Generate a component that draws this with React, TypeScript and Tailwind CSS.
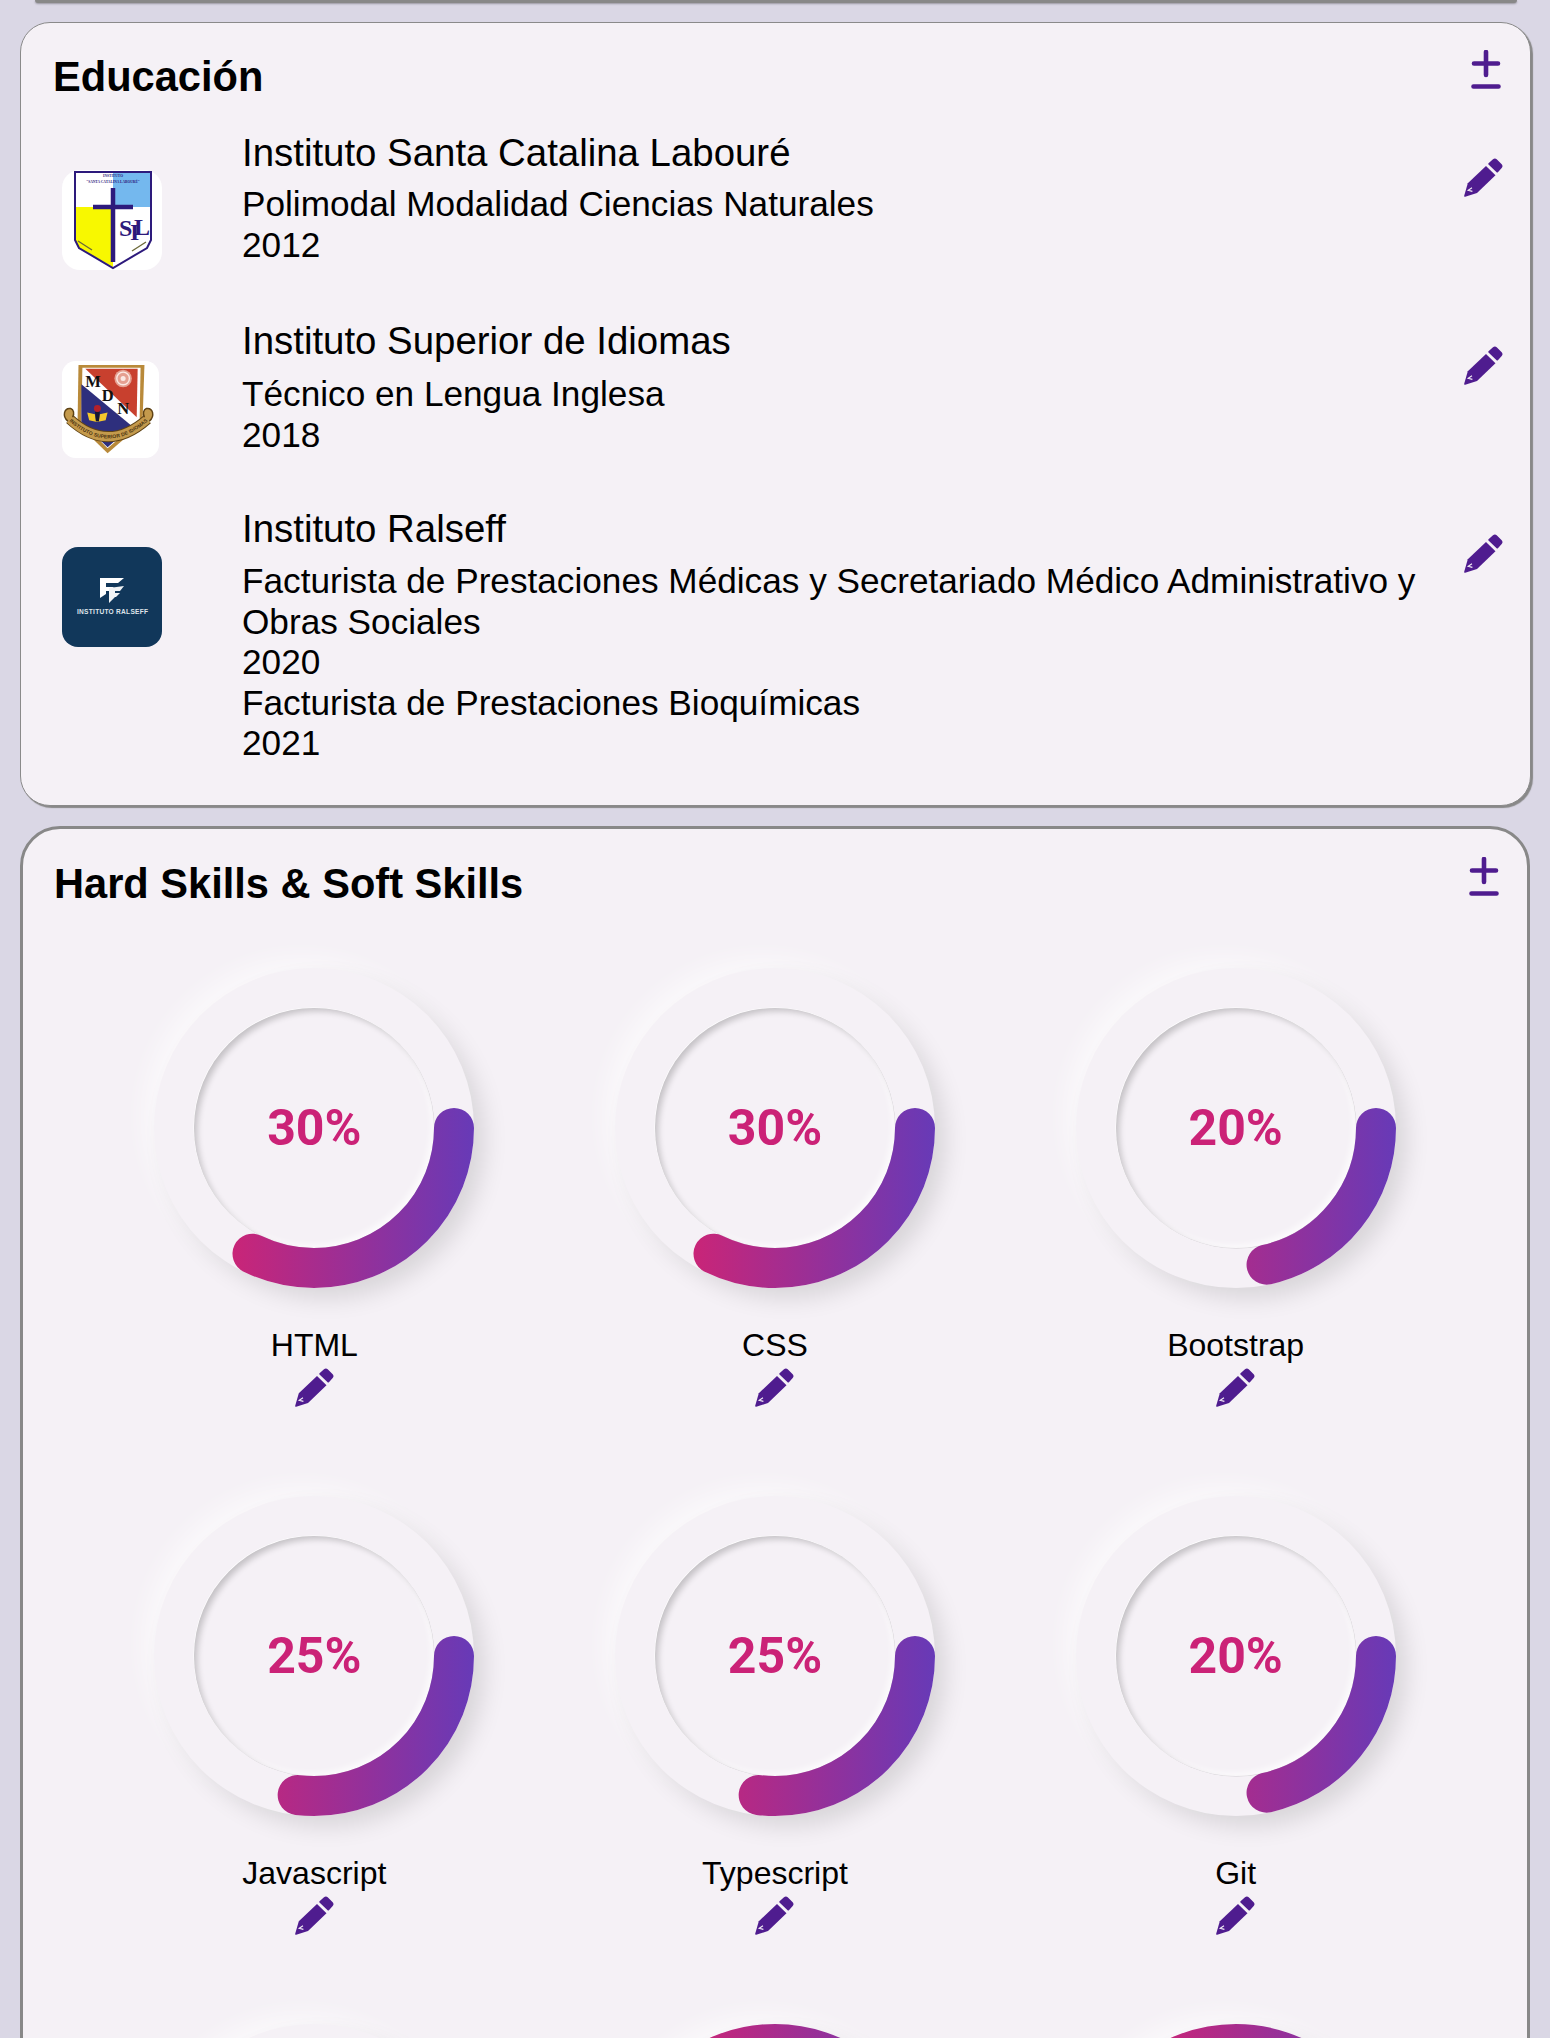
type Skill = { name: string; value: number };

const skills: Skill[] = [
  { name: "HTML", value: 30 },
  { name: "CSS", value: 30 },
  { name: "Bootstrap", value: 20 },
  { name: "Javascript", value: 25 },
  { name: "Typescript", value: 25 },
  { name: "Git", value: 20 },
];

// only the top of the third row is in the frame
const nextRow = [0, 90, 90];

const RADIUS = 140;
const DASH_TOTAL = 945;

function Pencil({ className }: { className?: string }) {
  return (
    <svg viewBox="0 0 39 39" className={`h-[39px] w-[39px] shrink-0 ${className ?? ""}`} aria-hidden="true">
      <path
        d="M24.5 5.2 29 1.2c1.2-1 2.6-1 3.7 0l5 5c1.1 1.2 1.1 2.6 0 3.8l-3.8 4.2c-.4.4-.9.4-1.3 0L24.5 6.6c-.4-.4-.4-1 0-1.4z"
        fill="#4f1c8f"
      />
      <path
        d="M22 8 31.5 17.2 13 35 1.2 38.8c-.7.2-1.2-.3-1-1L3.8 25.2z"
        fill="#4f1c8f"
      />
      <path d="M8 29.8 4.2 32.2 8.4 33.4" fill="none" stroke="#f5f1f6" strokeWidth="1.1" />
    </svg>
  );
}

function PlusMinus({ className }: { className?: string }) {
  return (
    <svg viewBox="0 0 30 39" className={`h-[39px] w-[30px] shrink-0 ${className ?? ""}`} aria-hidden="true">
      <path d="M15 2v23M3 13.5h24M2.5 36.5h25" stroke="#4f1c8f" strokeWidth="4.6" strokeLinecap="round" fill="none" />
    </svg>
  );
}

function SantaCatalinaLogo() {
  return (
    <svg viewBox="0 0 100 100" className="h-[100px] w-[100px]" aria-hidden="true">
      <rect width="100" height="100" rx="18" fill="#fff" />
      <path d="M51 3h38v34H51z" fill="#74b8ee" />
      <path d="M13 37h38v60L17 78l-4-8z" fill="#f8f800" />
      <path d="M13 2h76v68l-4 8-34 20-34-20-4-8z" fill="none" stroke="#2d1a7c" strokeWidth="2" />
      <path d="M51 18v74M31 37h40" stroke="#2d1a7c" strokeWidth="4.5" fill="none" />
      <text x="51" y="7" textAnchor="middle" fontSize="3.6" fontWeight="700" fontFamily="Liberation Serif, serif" fill="#2d1a7c">
        INSTITUTO
      </text>
      <text x="51" y="12.5" textAnchor="middle" fontSize="3.6" fontWeight="700" fontFamily="Liberation Serif, serif" fill="#2d1a7c">
        "SANTA CATALINA LABOURÉ"
      </text>
      <text x="57 68 72" y="66 70 65" fontSize="24" fontFamily="Liberation Serif, serif" fontWeight="700" fill="#2d1a7c">
        SIL
      </text>
      <path d="M16 71l14 9M70 81l14-9" stroke="#6d6a3a" strokeWidth="1.4" fill="none" />
    </svg>
  );
}

function IdiomasLogo() {
  return (
    <svg viewBox="0 0 100 100" className="h-[97px] w-[97px]" aria-hidden="true">
      <rect width="100" height="100" rx="14" fill="#fff" />
      <path d="M17 4h68l-2 60-36 31-31-30z" fill="#b98a3a" />
      <path d="M21 7h60l-1 55-33 28-27-27z" fill="#fff" />
      <path d="M24 8h54l-1 50z" fill="#c8402e" />
      <path d="M20 24l52 43-25 22-27-26z" fill="#2e2f7d" />
      <circle cx="63" cy="18" r="9" fill="#e5a091" />
      <circle cx="63" cy="18" r="6.5" fill="none" stroke="#fbe9e4" strokeWidth="1.4" />
      <circle cx="63" cy="18" r="2.6" fill="#fbe9e4" />
      <text x="24 41 57" y="27 41 55" fontSize="17" fontFamily="Liberation Serif, serif" fontWeight="700" fill="#111">
        MDN
      </text>
      <path d="M26 53l8 2 1 7h3l1-7 8-2-2 8-9 2-8-2z" fill="#f4c92c" />
      <path d="M34 52h5l-1 10h-3z" fill="#16162e" />
      <circle cx="36.5" cy="49" r="3.6" fill="#b3202a" />
      <path id="ribbon-arc" d="M8 60Q47 96 88 60" fill="none" stroke="#5f4315" strokeWidth="11" />
      <path d="M8 60Q47 96 88 60" fill="none" stroke="#c49a4c" strokeWidth="9" />
      <path d="M6 62c-6-5-4-14 3-13 3 1 4 5 2 9M90 62c6-5 4-14-3-13-3 1-4 5-2 9" fill="#c49a4c" stroke="#5f4315" strokeWidth="1.5" />
      <text fontSize="5.2" fontWeight="700" fontFamily="Liberation Sans, sans-serif" fill="#4a3210">
        <textPath href="#ribbon-arc" startOffset="50%" textAnchor="middle">
          <tspan dy="1.8">INSTITUTO SUPERIOR DE IDIOMAS</tspan>
        </textPath>
      </text>
    </svg>
  );
}

function RalseffLogo() {
  return (
    <svg viewBox="0 0 100 100" className="h-[100px] w-[100px]" aria-hidden="true">
      <rect width="100" height="100" rx="16" fill="#11375a" />
      <path d="M38 31h24l-6 5H44v4h8l-5 4h-3v3l-6 4z" fill="#fff" />
      <path d="M47 41l15-2-4 5h-5v2h5l-4 4h-1l-6 6z" fill="#f1f3f5" />
      <text x="50.5" y="67" textAnchor="middle" fontSize="6.6" fontWeight="700" textLength="71" fontFamily="Liberation Sans, sans-serif" fill="#dfe4ea">
        INSTITUTO RALSEFF
      </text>
    </svg>
  );
}

function Ring({ value, showText = true, id }: { value: number; showText?: boolean; id: string }) {
  const dash = (value / 100) * DASH_TOTAL;
  return (
    <div className="relative flex h-[320px] w-[320px] items-center justify-center rounded-full bg-[#f5f1f6] shadow-[12px_12px_24px_-2px_rgba(0,0,0,0.12),-12px_-12px_24px_-2px_rgba(255,255,255,0.55)]">
      <div className="flex h-[240px] w-[240px] items-center justify-center rounded-full shadow-[inset_4px_4px_6px_-1px_rgba(0,0,0,0.2),inset_-4px_-4px_6px_-1px_rgba(255,255,255,0.7),-0.5px_-0.5px_0_rgba(255,255,255,1),0.5px_0.5px_0_rgba(0,0,0,0.15)]">
        {showText && (
          <span className="font-['Roboto',sans-serif] text-[50px] font-bold text-[#cb2277]">{value}%</span>
        )}
      </div>
      {value > 0 && (
        <svg className="absolute left-0 top-0 h-[320px] w-[320px]" viewBox="0 0 320 320" aria-hidden="true">
          <defs>
            <linearGradient id={id} gradientUnits="userSpaceOnUse" x1="0" y1="0" x2="320" y2="0">
              <stop offset="0%" stopColor="#e91e63" />
              <stop offset="100%" stopColor="#673ab7" />
            </linearGradient>
          </defs>
          <circle
            cx="160"
            cy="160"
            r={RADIUS}
            fill="none"
            stroke={`url(#${id})`}
            strokeWidth="40"
            strokeLinecap="round"
            strokeDasharray={`${dash} ${DASH_TOTAL}`}
          />
        </svg>
      )}
    </div>
  );
}

function SkillItem({ skill }: { skill: Skill }) {
  return (
    <div className="flex h-[528px] flex-col items-center">
      <Ring value={skill.value} id={`ring-${skill.name}`} />
      <div className="mt-[39px] text-[32px] leading-[36px] text-black">{skill.name}</div>
      <Pencil className="mt-[5px]" />
    </div>
  );
}

function EduRow({
  logo,
  title,
  lines,
  className,
  logoClass,
  linesClass,
}: {
  logo: React.ReactNode;
  title: string;
  lines: string[];
  className?: string;
  logoClass?: string;
  linesClass?: string;
}) {
  return (
    <div className={`flex items-start ${className ?? ""}`}>
      <div className={`w-[189px] shrink-0 pl-[9px] ${logoClass ?? ""}`}>{logo}</div>
      <div className="min-w-0 flex-1">
        <div className="text-[38.4px] leading-[44px]">{title}</div>
        <div className={`text-[35.2px] leading-[40.5px] ${linesClass ?? ""}`}>
          {lines.map((l) => (
            <div key={l}>{l}</div>
          ))}
        </div>
      </div>
      <Pencil className="-mr-[2px] ml-[23px] mt-[27px]" />
    </div>
  );
}

export default function App() {
  return (
    <div className="h-[2038px] overflow-hidden bg-[#dad7e5] font-['Liberation_Sans',Arial,sans-serif] text-black">
      <div className="ml-[35px] h-[3px] w-[1482px] rounded-b-[30px] bg-[#888] shadow-[0_1px_2px_rgba(0,0,0,0.3)]" />
      <section className="ml-[20px] mt-[19px] h-[784px] w-[1511px] rounded-[30px] border border-[#8a8a8a] bg-[#f5f1f6] pl-[32px] pr-[29px] pt-[31px] shadow-[2px_2px_1px_#888]">
        <div className="flex items-start justify-between">
          <h2 className="text-[41.6px] font-bold leading-[46px]">Educación</h2>
          <PlusMinus className="mt-[-4px]" />
        </div>
        <EduRow
          className="mt-[31px]"
          logoClass="pt-[39px]"
          linesClass="mt-[9px]"
          logo={<SantaCatalinaLogo />}
          title="Instituto Santa Catalina Labouré"
          lines={["Polimodal Modalidad Ciencias Naturales", "2012"]}
        />
        <EduRow
          className="mt-[49px]"
          logoClass="pt-[42px]"
          linesClass="mt-[11px]"
          logo={<IdiomasLogo />}
          title="Instituto Superior de Idiomas"
          lines={["Técnico en Lengua Inglesa", "2018"]}
        />
        <EduRow
          className="mt-[49px]"
          logoClass="pt-[40px]"
          linesClass="mt-[10px]"
          logo={<RalseffLogo />}
          title="Instituto Ralseff"
          lines={[
            "Facturista de Prestaciones Médicas y Secretariado Médico Administrativo y Obras Sociales",
            "2020",
            "Facturista de Prestaciones Bioquímicas",
            "2021",
          ]}
        />
      </section>
      <section className="ml-[20px] mt-[20px] h-[1300px] w-[1510px] rounded-[40px] border-[3px] border-[#888] bg-[#f5f1f6] pl-[31px] pr-[28px] pt-[28px]">
        <div className="flex items-start justify-between">
          <h2 className="mt-[4px] text-[41.6px] font-bold leading-[46px]">Hard Skills &amp; Soft Skills</h2>
          <PlusMinus />
        </div>
        <div className="ml-[30px] mt-[61px] grid w-[1382px] grid-cols-3">
          {skills.map((s) => (
            <SkillItem key={s.name} skill={s} />
          ))}
          {nextRow.map((v, i) => (
            <div key={i} className="flex justify-center">
              <Ring value={v} showText={false} id={`ring-next-${i}`} />
            </div>
          ))}
        </div>
      </section>
    </div>
  );
}
